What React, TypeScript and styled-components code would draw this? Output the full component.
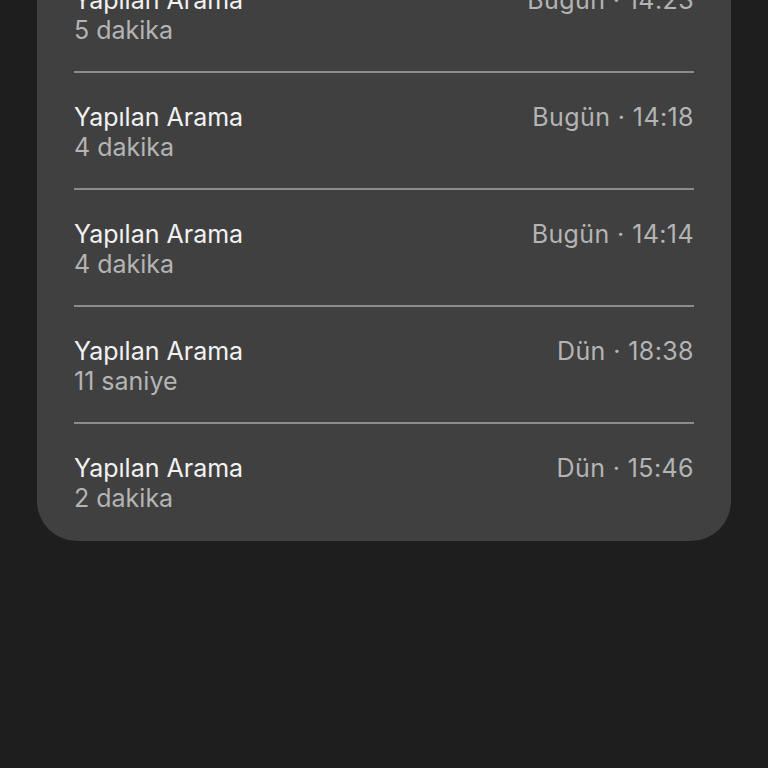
import React from "react";
import styled, { createGlobalStyle } from "styled-components";

type Call = {
  title: string;
  duration: string;
  when: string;
};

const calls: Call[] = [
  { title: "Yapılan Arama", duration: "5 dakika", when: "Bugün · 14:23" },
  { title: "Yapılan Arama", duration: "4 dakika", when: "Bugün · 14:18" },
  { title: "Yapılan Arama", duration: "4 dakika", when: "Bugün · 14:14" },
  { title: "Yapılan Arama", duration: "11 saniye", when: "Dün · 18:38" },
  { title: "Yapılan Arama", duration: "2 dakika", when: "Dün · 15:46" },
];

const App = () => {
  return (
    <>
      <GlobalStyle />
      <Page>
        <Card>
          {calls.map((call, i) => (
            <Row key={i} last={i === calls.length - 1}>
              <Info>
                <Title>{call.title}</Title>
                <Duration>{call.duration}</Duration>
              </Info>
              <When>{call.when}</When>
            </Row>
          ))}
        </Card>
      </Page>
    </>
  );
};

export default App;

const GlobalStyle = createGlobalStyle`
  html, body {
    margin: 0;
    padding: 0;
    background: #1e1e1e;
  }
  body {
    font-family: Inter, "Noto Sans", sans-serif;
    -webkit-font-smoothing: antialiased;
  }
`;

const Page = styled.div`
  width: 768px;
  height: 768px;
  overflow: hidden;
  background: #1e1e1e;
  padding: 0 37px;
  box-sizing: border-box;
`;

const Card = styled.div`
  margin-top: -44px;
  background: #404040;
  border-radius: 0 0 40px 40px;
  padding: 0 37px;
`;

const Row = styled.div<{ last?: boolean }>`
  display: flex;
  justify-content: space-between;
  align-items: flex-start;
  padding: 29px 0 ${(props) => (props.last ? "28px" : "26px")};
  border-bottom: ${(props) => (props.last ? "none" : "2px solid #8c8c8c")};
`;

const Info = styled.div`
  display: flex;
  flex-direction: column;
`;

const Title = styled.div`
  font-size: 25px;
  line-height: 30px;
  color: #f2f2f2;
`;

const Duration = styled.div`
  font-size: 25px;
  line-height: 30px;
  color: #b4b4b4;
`;

const When = styled.div`
  font-size: 25px;
  line-height: 30px;
  letter-spacing: 0.4px;
  color: #b4b4b4;
`;
